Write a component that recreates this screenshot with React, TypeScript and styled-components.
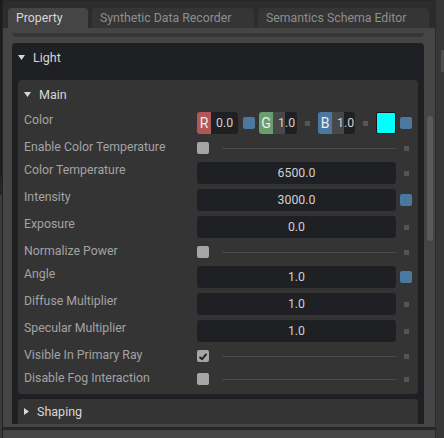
import styled, { createGlobalStyle } from "styled-components";

const GlobalStyle = createGlobalStyle`
  html, body {
    margin: 0;
    padding: 0;
    background: #454545;
  }
  body {
    font-family: Roboto, "Noto Sans", sans-serif;
    font-size: 12.3px;
  }
`;

const Window = styled.div`
  width: 444px;
  height: 438px;
  display: flex;
  overflow: hidden;
  background: #454545;
`;

const LeftEdge = styled.div`
  width: 2px;
  flex: none;
  background: linear-gradient(to bottom, #1c1c1c 0 177px, #262626 177px 195px, #3b3b3b 195px);
  border-right: 1px solid #232323;
`;

const RightEdge = styled.div`
  width: 8px;
  flex: none;
  background: #363636;
  border-left: 1px solid #2b2b2b;
  display: flex;
  justify-content: flex-end;
`;

const EdgeMark = styled.div`
  width: 3px;
  height: 22px;
  margin-top: 50px;
  background: #4e4e4e;
`;

const Column = styled.div`
  flex: 1;
  display: flex;
  flex-direction: column;
  min-width: 0;
`;

const TabBar = styled.div`
  height: 20px;
  padding: 7px 0 0 5px;
  display: flex;
  gap: 4px;
  background: #2c2c2c;
  border-top: 1px solid #262626;
`;

const Tab = styled.div<{ $active?: boolean; $w: number }>`
  width: ${(p) => p.$w}px;
  box-sizing: border-box;
  padding-left: 8px;
  border-radius: 4px 4px 0 0;
  background: ${(p) => (p.$active ? "#454545" : "#353535")};
  color: ${(p) => (p.$active ? "#d6d6d6" : "#8e8e8e")};
  line-height: 20px;
  white-space: nowrap;
`;

const Panel = styled.div`
  flex: 1;
  display: flex;
  min-height: 0;
  background: #454545;
`;

const Viewport = styled.div`
  width: 412px;
  margin-left: 9px;
  height: 396px;
  overflow: hidden;
  display: flex;
  flex-direction: column;
`;

const PrevFrameTail = styled.div`
  height: 4px;
  margin-top: 5px;
  margin-bottom: 6px;
  background: #363636;
  border-radius: 0 0 4px 4px;
  flex: none;
`;

const Frame = styled.div<{ $tone: "dark" | "mid" }>`
  flex: none;
  background: ${(p) => (p.$tone === "dark" ? "#1f2023" : "#343434")};
  border-radius: 4px;
  padding: 0 6px;
`;

const Header = styled.div`
  height: 28px;
  display: flex;
  align-items: center;
  gap: 8px;
  color: #d8d8d8;
  font-size: 12.5px;
`;

const Rows = styled.div`
  padding: 4px 0 6px;
  display: flex;
  flex-direction: column;
  gap: 5px;
`;

const Row = styled.div<{ $h: number }>`
  display: grid;
  grid-template-columns: 173px 199px 16px;
  height: ${(p) => p.$h}px;
  align-items: center;
`;

const Label = styled.div`
  align-self: start;
  line-height: 16px;
  color: #a3a3a3;
  white-space: nowrap;
`;

const Field = styled.div`
  height: 22px;
  line-height: 22px;
  background: #1f2023;
  border-radius: 3px;
  color: #d0d0d0;
  text-align: center;
`;

const Slot = styled.div`
  justify-self: end;
  width: 12px;
  display: flex;
  justify-content: center;
`;

const BlueSquare = styled.div`
  width: 12px;
  height: 12px;
  border-radius: 2px;
  background: #4a78a1;
`;

const Dot = styled.div`
  width: 5px;
  height: 5px;
  background: #555555;
`;

const CheckCell = styled.div`
  display: flex;
  align-items: center;
  gap: 13px;
`;

const Check = styled.div`
  width: 12px;
  height: 12px;
  flex: none;
  border-radius: 2px;
  background: #a6a6a6;
  display: flex;
  align-items: center;
  justify-content: center;
`;

const Rule = styled.div`
  flex: 1;
  height: 1px;
  background: #4b4b4b;
`;

const ColorCell = styled.div`
  display: flex;
  align-items: center;
  height: 22px;
`;

const Channel = styled.div`
  display: flex;
  height: 22px;
  border-radius: 3px;
  overflow: hidden;
  flex: none;
`;

const Badge = styled.div<{ $c: string }>`
  width: 14px;
  background: ${(p) => p.$c};
  color: #eeeeee;
  font-size: 14px;
  line-height: 22px;
  text-align: center;
`;

const ChannelValue = styled.div<{ $w: number; $fill: number }>`
  width: ${(p) => p.$w}px;
  box-sizing: border-box;
  padding-left: 5px;
  line-height: 22px;
  color: #d0d0d0;
  background: linear-gradient(
    to right,
    #484848 0 ${(p) => p.$fill}px,
    #1f2023 ${(p) => p.$fill}px
  );
`;

const Swatch = styled.div`
  width: 20px;
  height: 20px;
  margin-left: auto;
  background: #00ffff;
  border: 1px solid #151515;
  border-radius: 2px;
`;

const Scrollbar = styled.div`
  flex: 1;
  display: flex;
  justify-content: center;
  padding-top: 88px;
`;

const Thumb = styled.div`
  width: 6px;
  height: 125px;
  margin-left: 1px;
  border-radius: 3px;
  background: #5a5a5a;
`;

const BottomLine = styled.div`
  height: 3px;
  margin-top: 4px;
  background: #262626;
  flex: none;
`;

const Footer = styled.div`
  height: 8px;
  background: #454545;
  flex: none;
`;

function Arrow({ open }: { open: boolean }) {
  return open ? (
    <svg width="7" height="5" viewBox="0 0 7 5">
      <polygon points="0,0 7,0 3.5,5" fill="#d8d8d8" />
    </svg>
  ) : (
    <svg width="5" height="7" viewBox="0 0 5 7">
      <polygon points="0,0 5,3.5 0,7" fill="#d8d8d8" />
    </svg>
  );
}

function Tick() {
  return (
    <svg width="10" height="9" viewBox="0 0 10 9">
      <path d="M1.5 5 L4 7.2 L8.5 1.8" fill="none" stroke="#1c1c1c" strokeWidth="1.8" />
    </svg>
  );
}

type Prop =
  | { kind: "field"; label: string; value: string; keyed?: boolean }
  | { kind: "check"; label: string; checked?: boolean };

const props: Prop[] = [
  { kind: "check", label: "Enable Color Temperature" },
  { kind: "field", label: "Color Temperature", value: "6500.0" },
  { kind: "field", label: "Intensity", value: "3000.0", keyed: true },
  { kind: "field", label: "Exposure", value: "0.0" },
  { kind: "check", label: "Normalize Power" },
  { kind: "field", label: "Angle", value: "1.0", keyed: true },
  { kind: "field", label: "Diffuse Multiplier", value: "1.0" },
  { kind: "field", label: "Specular Multiplier", value: "1.0" },
  { kind: "check", label: "Visible In Primary Ray", checked: true },
  { kind: "check", label: "Disable Fog Interaction" },
];

function PropRow({ p }: { p: Prop }) {
  if (p.kind === "check") {
    return (
      <Row $h={18}>
        <Label>{p.label}</Label>
        <CheckCell>
          <Check>{p.checked && <Tick />}</Check>
          <Rule />
        </CheckCell>
        <Slot>
          <Dot />
        </Slot>
      </Row>
    );
  }
  return (
    <Row $h={22}>
      <Label>{p.label}</Label>
      <Field>{p.value}</Field>
      <Slot>{p.keyed ? <BlueSquare /> : <Dot />}</Slot>
    </Row>
  );
}

export default function App() {
  return (
    <>
      <GlobalStyle />
      <Window>
        <LeftEdge />
        <Column>
          <TabBar>
            <Tab $active $w={80}>Property</Tab>
            <Tab $w={162}>Synthetic Data Recorder</Tab>
            <Tab $w={171}>Semantics Schema Editor</Tab>
          </TabBar>
          <Panel>
            <Viewport>
              <PrevFrameTail />
              <Frame $tone="dark">
                <Header>
                  <Arrow open />
                  Light
                </Header>
                <Frame $tone="mid" style={{ marginTop: 9 }}>
                  <Header>
                    <Arrow open />
                    Main
                  </Header>
                  <Rows>
                    <Row $h={22}>
                      <Label>Color</Label>
                      <ColorCell>
                        <Channel>
                          <Badge $c="#b35656">R</Badge>
                          <ChannelValue $w={27} $fill={0}>0.0</ChannelValue>
                        </Channel>
                        <div style={{ marginLeft: 5, marginRight: 4 }}>
                          <BlueSquare />
                        </div>
                        <Channel>
                          <Badge $c="#6b9d6f">G</Badge>
                          <ChannelValue $w={24} $fill={12}>1.0</ChannelValue>
                        </Channel>
                        <div style={{ margin: "0 8px" }}>
                          <Dot />
                        </div>
                        <Channel>
                          <Badge $c="#4a78a1">B</Badge>
                          <ChannelValue $w={23} $fill={12}>1.0</ChannelValue>
                        </Channel>
                        <div style={{ margin: "0 8px" }}>
                          <Dot />
                        </div>
                        <Swatch />
                      </ColorCell>
                      <Slot>
                        <BlueSquare />
                      </Slot>
                    </Row>
                    {props.map((p) => (
                      <PropRow key={p.label} p={p} />
                    ))}
                  </Rows>
                </Frame>
                <Frame $tone="mid" style={{ marginTop: 5, height: 40 }}>
                  <Header style={{ height: 25, gap: 8 }}>
                    <Arrow open={false} />
                    Shaping
                  </Header>
                </Frame>
              </Frame>
            </Viewport>
            <Scrollbar>
              <Thumb />
            </Scrollbar>
          </Panel>
          <BottomLine />
          <Footer />
        </Column>
        <RightEdge>
          <EdgeMark />
        </RightEdge>
      </Window>
    </>
  );
}
